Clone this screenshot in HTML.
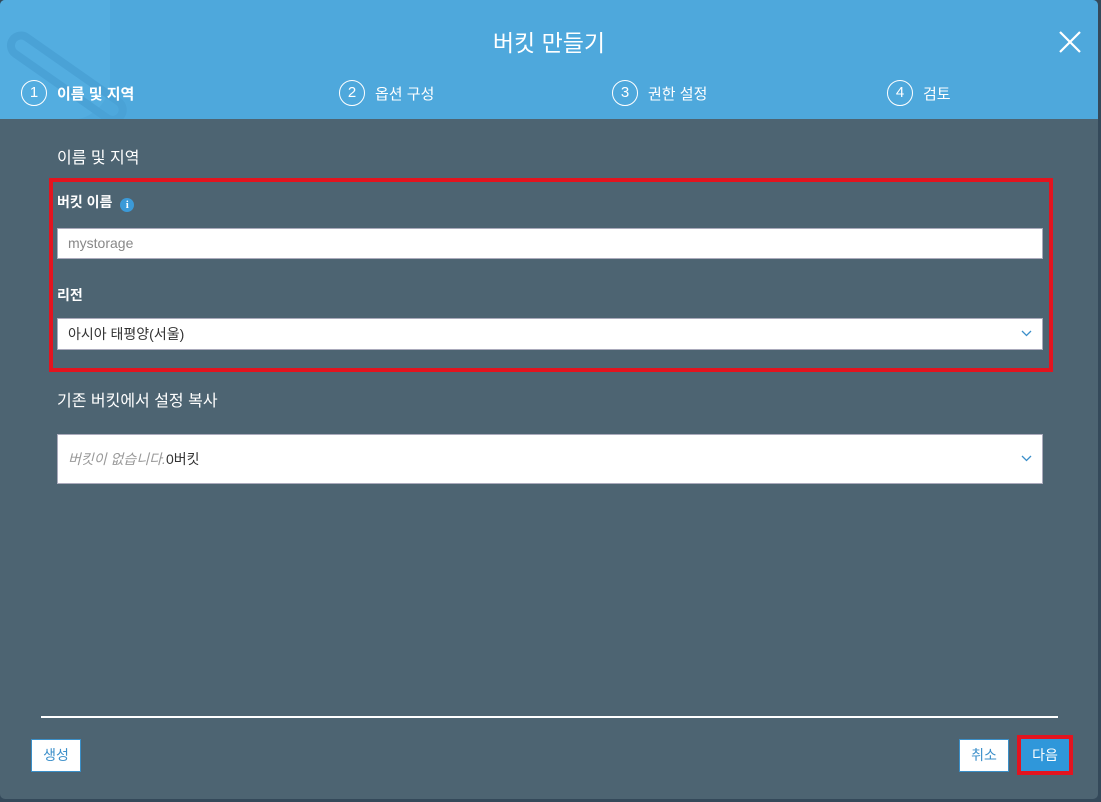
<!DOCTYPE html>
<html><head><meta charset="utf-8"><style>
*{box-sizing:border-box;margin:0;padding:0}
html,body{width:1101px;height:802px;overflow:hidden;background:#34495a;font-family:"Liberation Sans","Noto Sans CJK KR",sans-serif}
.dlg{position:absolute;left:0;top:0;width:1098px;height:799px;background:#4d6472;border-radius:5px;overflow:hidden}
.hdr{position:absolute;left:0;top:0;width:100%;height:119px;background:#4ea8dc;overflow:hidden}
.bucket{position:absolute;left:-20px;top:-30px;width:130px;height:150px;background:#53ade0;border-radius:0 0 40px 10px}
.handle{position:absolute;left:10px;top:30px;width:140px;height:28px;border:8px solid #4aa2d6;border-radius:16px;transform:rotate(35deg);transform-origin:10px 10px}
.title{position:absolute;left:0;width:100%;top:24px;text-align:center;color:#fff;font-size:23px}
.close{position:absolute;left:1059px;top:31px}
.step{position:absolute;top:80px;color:#fff;font-size:15px;display:flex;align-items:center}
.step .c{width:26px;height:26px;border:1.5px solid #fff;border-radius:50%;text-align:center;line-height:23px;font-size:15px;margin-right:10px}
.step b{font-weight:bold}
.lbl{position:absolute;color:#fff}
.red{position:absolute;border:4px solid #e3141f}
.inp{position:absolute;left:57px;width:986px;background:#fff;border:1px solid #aab;font-size:14px;color:#333;padding-left:10px}
.chev{position:absolute;right:10px;top:50%;margin-top:-4px}
.line{position:absolute;left:41px;top:716px;width:1017px;height:2px;background:#fff}
.btn{position:absolute;background:#fff;border:1px solid #3a8fc8;color:#3b8fca;font-size:14px;text-align:center}
</style></head><body>
<div class="dlg">
 <div class="hdr">
  <div class="bucket"></div><div class="handle"></div>
  <div class="title">버킷 만들기</div>
  <svg class="close" width="22" height="22" viewBox="0 0 22 22"><path d="M1 1L21 21M21 1L1 21" stroke="#fff" stroke-width="2.2"/></svg>
  <div class="step" style="left:21px"><div class="c">1</div><b>이름 및 지역</b></div>
  <div class="step" style="left:339px"><div class="c">2</div>옵션 구성</div>
  <div class="step" style="left:612px"><div class="c">3</div>권한 설정</div>
  <div class="step" style="left:887px"><div class="c">4</div>검토</div>
 </div>
 <div class="lbl" style="left:57px;top:144px;font-size:16px">이름 및 지역</div>
 <div class="red" style="left:49px;top:178px;width:1004px;height:194px"></div>
 <div class="lbl" style="left:57px;top:192px;font-size:14px;font-weight:bold">버킷 이름 <span style="display:inline-block;width:14px;height:14px;border-radius:50%;background:#3b9ad8;color:#fff;font-size:11px;line-height:14px;text-align:center;vertical-align:-1px;margin-left:4px;font-family:'Liberation Serif',serif;font-weight:bold">i</span></div>
 <div class="inp" style="top:228px;height:31px;line-height:29px;color:#888">mystorage</div>
 <div class="lbl" style="left:57px;top:285px;font-size:14px;font-weight:bold">리전</div>
 <div class="inp" style="top:318px;height:32px;line-height:30px;padding-left:10px">아시아 태평양(서울)<svg class="chev" width="11" height="7" viewBox="0 0 11 7"><path d="M1 1L5.5 5.5L10 1" stroke="#3b8fca" stroke-width="1.3" fill="none"/></svg></div>
 <div class="lbl" style="left:57px;top:387px;font-size:16px">기존 버킷에서 설정 복사</div>
 <div class="inp" style="top:434px;height:50px;line-height:48px"><i style="color:#999">버킷이 없습니다.</i>0버킷<svg class="chev" width="11" height="7" viewBox="0 0 11 7"><path d="M1 1L5.5 5.5L10 1" stroke="#3b8fca" stroke-width="1.3" fill="none"/></svg></div>
 <div class="line"></div>
 <div class="btn" style="left:31px;top:739px;width:50px;height:33px;line-height:31px">생성</div>
 <div class="btn" style="left:959px;top:739px;width:50px;height:33px;line-height:31px">취소</div>
 <div style="position:absolute;left:1017px;top:735px;width:56px;height:40px;border:4px solid #e3141f;background:#2f97da;color:#fff;font-size:14px;text-align:center;line-height:32px">다음</div>
</div>
</body></html>
